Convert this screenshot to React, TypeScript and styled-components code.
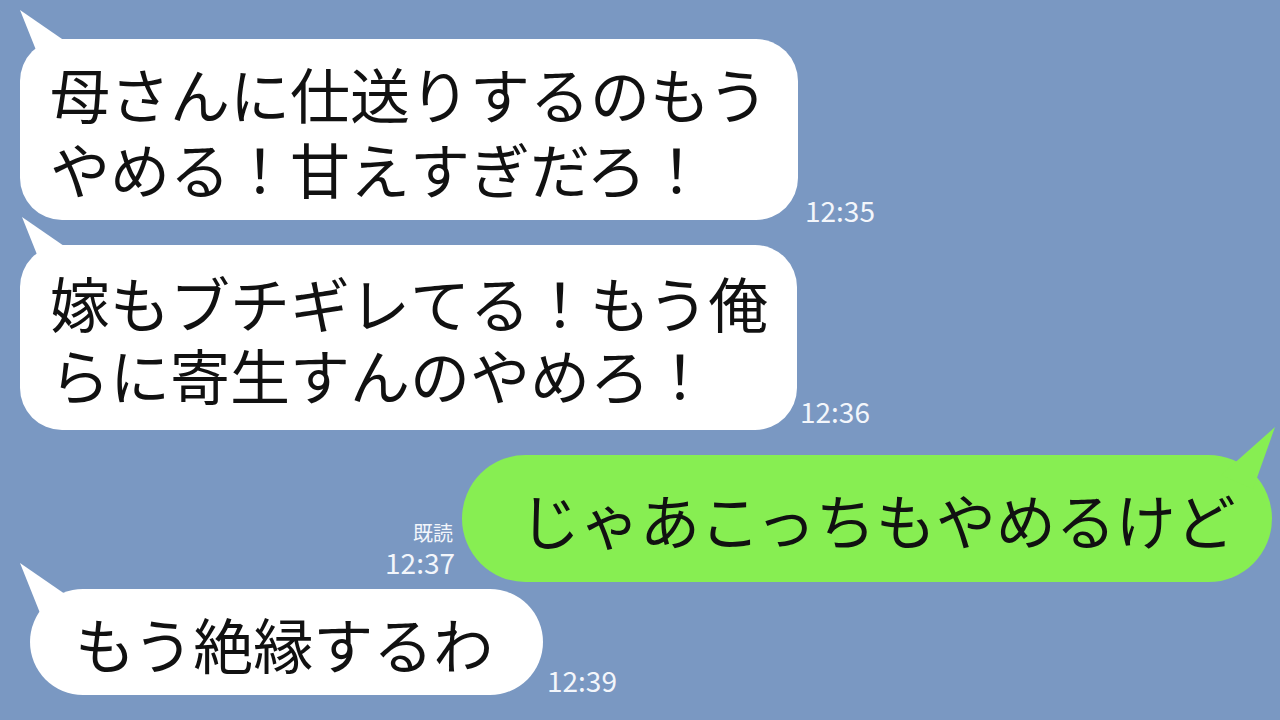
import React from "react";
import styled, { createGlobalStyle } from "styled-components";

const Global = createGlobalStyle`
  html, body { margin: 0; padding: 0; }
  body {
    width: 1280px;
    height: 720px;
    overflow: hidden;
    background: #7a98c2;
    font-family: "Noto Sans CJK JP", "Noto Sans", sans-serif;
  }
`;

const Chat = styled.div`
  width: 1280px;
  height: 720px;
  box-sizing: border-box;
  padding-top: 39px;
  display: flex;
  flex-direction: column;
`;

const Row = styled.div<{ $side: "left" | "right"; $inset: number; $top: number }>`
  display: flex;
  flex-direction: ${(p) => (p.$side === "left" ? "row" : "row-reverse")};
  align-items: flex-end;
  margin-top: ${(p) => p.$top}px;
  ${(p) => (p.$side === "left" ? `padding-left: ${p.$inset}px;` : `padding-right: ${p.$inset}px;`)}
`;

const Bubble = styled.div<{ $w: number; $h: number; $r: number; $pad: number; $green?: boolean }>`
  position: relative;
  box-sizing: border-box;
  width: ${(p) => p.$w}px;
  height: ${(p) => p.$h}px;
  border-radius: ${(p) => p.$r}px;
  background: ${(p) => (p.$green ? "#87ee52" : "#ffffff")};
  padding-left: ${(p) => p.$pad}px;
  display: flex;
  flex-direction: column;
  justify-content: center;
`;

const Line = styled.div<{ $lh: number }>`
  font-size: 60px;
  line-height: ${(p) => p.$lh}px;
  color: #111;
  white-space: nowrap;
`;

const TailSvg = styled.svg<{ $side: "left" | "right"; $dx: number; $dy: number }>`
  position: absolute;
  top: ${(p) => -p.$dy}px;
  ${(p) => (p.$side === "left" ? `left: ${p.$dx}px;` : `right: ${p.$dx}px;`)}
  width: 60px;
  height: 70px;
  overflow: visible;
`;

const Meta = styled.div<{ $gap: number; $side: "left" | "right"; $drop: number }>`
  display: flex;
  flex-direction: column;
  align-items: ${(p) => (p.$side === "left" ? "flex-start" : "flex-end")};
  ${(p) => (p.$side === "left" ? `margin-left: ${p.$gap}px;` : `margin-right: ${p.$gap}px;`)}
  margin-bottom: ${(p) => -p.$drop}px;
  color: #f3f6fb;
`;

const Read = styled.span`
  font-size: 20px;
  line-height: 25px;
  margin-right: 2px;
`;

const Time = styled.span`
  font-size: 28px;
  line-height: 34px;
`;

const Tail: React.FC<{ side: "left" | "right"; dx: number; dy: number; color: string }> = ({ side, dx, dy, color }) => (
  <TailSvg $side={side} $dx={dx} $dy={dy} viewBox="0 0 60 70">
    {side === "left" ? (
      <polygon points="0,0 24,60 58,40" fill={color} />
    ) : (
      <polygon points="60,0 6,48 38,62" fill={color} />
    )}
  </TailSvg>
);

export default function App() {
  return (
    <>
      <Global />
      <Chat>
        <Row $side="left" $inset={20} $top={0}>
          <Bubble $w={778} $h={181} $r={42} $pad={30}>
            <Tail side="left" dx={0} dy={29} color="#ffffff" />
            <Line $lh={75}>母さんに仕送りするのもう</Line>
            <Line $lh={75}>やめる！甘えすぎだろ！</Line>
          </Bubble>
          <Meta $side="left" $gap={7} $drop={7}>
            <Time>12:35</Time>
          </Meta>
        </Row>

        <Row $side="left" $inset={20} $top={25}>
          <Bubble $w={777} $h={185} $r={42} $pad={30}>
            <Tail side="left" dx={2} dy={28} color="#ffffff" />
            <Line $lh={72}>嫁もブチギレてる！もう俺</Line>
            <Line $lh={72}>らに寄生すんのやめろ！</Line>
          </Bubble>
          <Meta $side="left" $gap={3} $drop={-2}>
            <Time>12:36</Time>
          </Meta>
        </Row>

        <Row $side="right" $inset={8} $top={25}>
          <Bubble $w={810} $h={127} $r={64} $pad={58} $green>
            <Tail side="right" dx={-3} dy={28} color="#87ee52" />
            <Line $lh={75}>じゃあこっちもやめるけど</Line>
          </Bubble>
          <Meta $side="right" $gap={7} $drop={-3}>
            <Read>既読</Read>
            <Time>12:37</Time>
          </Meta>
        </Row>

        <Row $side="left" $inset={30} $top={7}>
          <Bubble $w={513} $h={106} $r={53} $pad={45}>
            <Tail side="left" dx={-10} dy={26} color="#ffffff" />
            <Line $lh={75}>もう絶縁するわ</Line>
          </Bubble>
          <Meta $side="left" $gap={4} $drop={2}>
            <Time>12:39</Time>
          </Meta>
        </Row>
      </Chat>
    </>
  );
}
